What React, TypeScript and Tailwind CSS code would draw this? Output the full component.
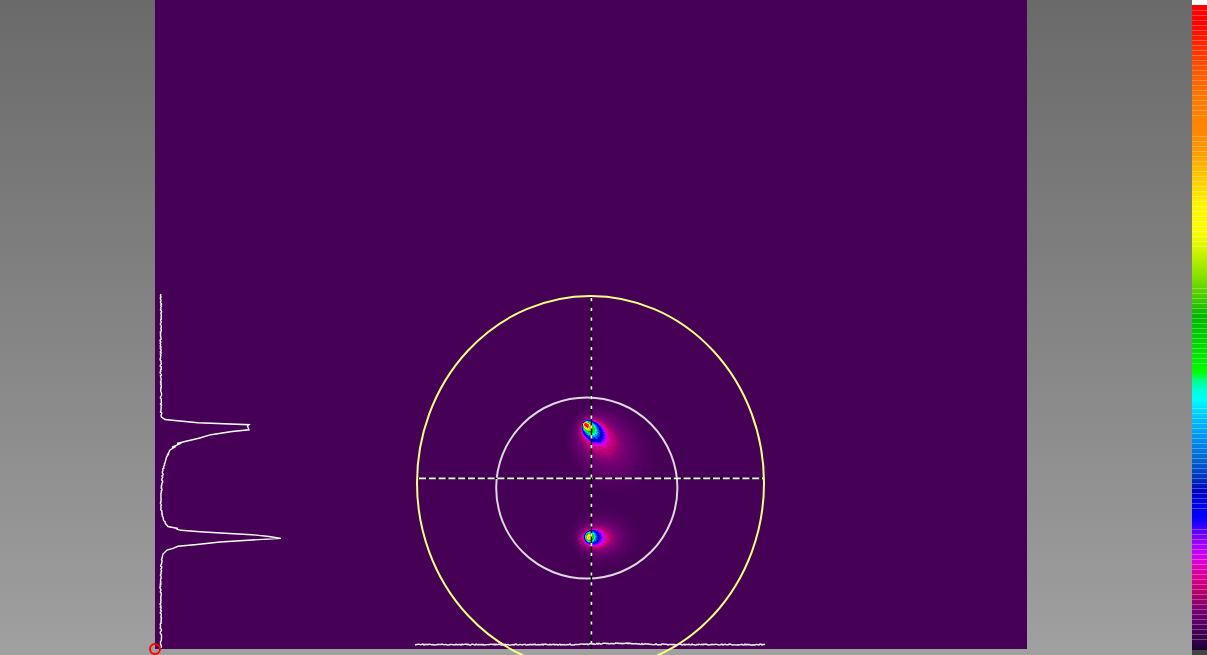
type Contour = { level: number; cx: number; cy: number; a: number; b: number; angle: number };

const COLOR_STOPS: [number, number, number, number][] = [
  [0, 32, 0, 48],
  [0.03, 70, 0, 86],
  [0.05, 98, 0, 106],
  [0.07, 125, 0, 118],
  [0.09, 165, 0, 112],
  [0.11, 205, 0, 125],
  [0.13, 222, 0, 190],
  [0.15, 200, 0, 255],
  [0.18, 110, 0, 255],
  [0.21, 0, 0, 255],
  [0.25, 0, 0, 195],
  [0.29, 0, 90, 210],
  [0.35, 0, 180, 255],
  [0.39, 0, 255, 255],
  [0.435, 0, 255, 0],
  [0.52, 0, 185, 0],
  [0.6, 170, 230, 0],
  [0.68, 255, 250, 0],
  [0.8, 255, 136, 0],
  [0.95, 255, 0, 0],
  [1, 255, 0, 0],
];

const UPPER_SPOT: Contour[] = [
  { level: 0.031, cx: 610, cy: 449, a: 48, b: 40, angle: 45 },
  { level: 0.045, cx: 605, cy: 444, a: 36, b: 28, angle: 45 },
  { level: 0.065, cx: 601, cy: 440, a: 27, b: 19, angle: 45 },
  { level: 0.09, cx: 598, cy: 437, a: 21, b: 14.5, angle: 45 },
  { level: 0.12, cx: 595, cy: 433.5, a: 16, b: 11, angle: 45 },
  { level: 0.16, cx: 593.5, cy: 432, a: 14, b: 9.5, angle: 45 },
  { level: 0.21, cx: 592.5, cy: 431, a: 12.5, b: 8.3, angle: 45 },
  { level: 0.28, cx: 591, cy: 429.5, a: 10, b: 6.7, angle: 45 },
  { level: 0.39, cx: 589.5, cy: 428, a: 7.8, b: 5, angle: 45 },
  { level: 0.52, cx: 588, cy: 427, a: 5.8, b: 3.8, angle: 45 },
  { level: 0.68, cx: 587, cy: 426, a: 4.2, b: 2.8, angle: 45 },
  { level: 0.95, cx: 586.5, cy: 425, a: 2.2, b: 1.4, angle: 45 },
];

const LOWER_SPOT: Contour[] = [
  { level: 0.031, cx: 604, cy: 537, a: 34, b: 29, angle: 0 },
  { level: 0.045, cx: 601, cy: 538, a: 25, b: 19, angle: 0 },
  { level: 0.07, cx: 597.5, cy: 538, a: 19, b: 13, angle: 0 },
  { level: 0.1, cx: 595.5, cy: 538, a: 14, b: 9.8, angle: 0 },
  { level: 0.15, cx: 593.5, cy: 537.5, a: 10, b: 8, angle: 0 },
  { level: 0.21, cx: 592, cy: 537, a: 7.8, b: 7, angle: 0 },
  { level: 0.28, cx: 591, cy: 537, a: 6, b: 6, angle: 0 },
  { level: 0.39, cx: 590, cy: 537, a: 4.6, b: 4.7, angle: 0 },
  { level: 0.52, cx: 589.5, cy: 537, a: 3.6, b: 3.6, angle: 0 },
  { level: 0.72, cx: 589, cy: 537, a: 2, b: 2, angle: 0 },
];

function noise(x: number, y: number) {
  const n = Math.sin(x * 127.1 + y * 311.7) * 43758.5453;
  return n - Math.floor(n) - 0.5;
}

function colorAt(t: number) {
  let i = 1;
  while (i < COLOR_STOPS.length - 1 && COLOR_STOPS[i][0] < t) i++;
  const lo = COLOR_STOPS[i - 1];
  const hi = COLOR_STOPS[i];
  const f = Math.min(1, Math.max(0, (t - lo[0]) / (hi[0] - lo[0])));
  const mix = (k: number) => Math.round(lo[k] + (hi[k] - lo[k]) * f);
  return `rgb(${mix(1)},${mix(2)},${mix(3)})`;
}

function distance(c: Contour, x: number, y: number) {
  const r = (c.angle * Math.PI) / 180;
  const dx = x - c.cx;
  const dy = y - c.cy;
  const u = dx * Math.cos(r) + dy * Math.sin(r);
  const v = dy * Math.cos(r) - dx * Math.sin(r);
  return Math.hypot(u / c.a, v / c.b);
}

function intensity(spot: Contour[], x: number, y: number) {
  if (distance(spot[0], x, y) >= 1) return 0;
  for (let i = 1; i < spot.length; i++) {
    const outer = 1 - distance(spot[i - 1], x, y);
    const inner = distance(spot[i], x, y) - 1;
    if (inner > 0) {
      const f = Math.max(0, outer) / (Math.max(0, outer) + inner);
      return spot[i - 1].level + (spot[i].level - spot[i - 1].level) * f;
    }
  }
  return spot[spot.length - 1].level;
}

/* One path per intensity step, made of horizontal runs of sensor pixels. */
function rasterize(spot: Contour[], x0: number, y0: number, x1: number, y1: number) {
  const paths = new Map<number, string>();
  for (let y = y0; y < y1; y++) {
    let start = x0;
    let current = -1;
    for (let x = x0; x <= x1; x++) {
      let t = x < x1 ? intensity(spot, x + 0.5, y + 0.5) : 0;
      if (t > 0) t *= 1 + noise(x, y) * 0.14;
      const step = t > 0.0305 ? Math.round(t * 400) : -1;
      if (step !== current || x === x1) {
        if (current >= 0) {
          paths.set(current, (paths.get(current) ?? "") + `M${start} ${y}h${x - start}v1H${start}z`);
        }
        start = x;
        current = step;
      }
    }
  }
  return [...paths.entries()];
}

const SPOTS = [
  ...rasterize(UPPER_SPOT, 560, 400, 665, 500),
  ...rasterize(LOWER_SPOT, 565, 505, 645, 570),
];

const VERTICAL_KEYS: [number, number][] = [
  [161, 294], [160.7, 345], [161, 410], [161.5, 417], [165, 419.5], [180, 421], [198, 422.7],
  [249, 424.7], [247.5, 426], [249, 429.8], [232, 431.5], [211, 434.7], [198, 438.5], [201, 437.8],
  [185, 441.5], [177, 443.5], [182, 442.8], [172, 447.2], [176, 446.5], [170, 450], [168, 454],
  [169, 453.5], [166.5, 457], [165, 463], [163, 470], [162, 483], [161, 497], [161, 507],
  [162.5, 515], [165, 523], [168, 526.5], [178, 528.5], [176, 528.8], [181, 530.3], [200, 531.7],
  [225, 533.2], [252, 534.7], [269, 536.5], [281, 538.4], [252, 540], [220, 542], [197, 544.5],
  [178, 546.3], [173, 548.3], [167, 550], [163, 554], [161.5, 560], [161, 572], [160.5, 580],
  [161, 648],
];

function verticalProfile() {
  const out: string[] = [];
  VERTICAL_KEYS.forEach(([x, y], i) => {
    out.push(`${x},${y}`);
    const next = VERTICAL_KEYS[i + 1];
    if (next && next[1] - y > 6) {
      for (let s = y + 1; s < next[1]; s += 1) {
        const f = (s - y) / (next[1] - y);
        out.push(`${x + (next[0] - x) * f + noise(s, 7) * 1.4},${s}`);
      }
    }
  });
  return out.join(" ");
}

function horizontalProfile() {
  const out: string[] = [];
  for (let x = 415; x <= 765; x += 1) {
    const bump = 1.3 * Math.exp(-(((x - 617) / 28) ** 2));
    out.push(`${x},${644.6 - bump + noise(x, 3) * 1.1}`);
  }
  return out.join(" ");
}

const TICKED = "bg-[repeating-linear-gradient(to_bottom,rgba(255,255,255,0.28)_0px,rgba(255,255,255,0.28)_1px,transparent_1px,transparent_5px)]";

const SCALE_SEGMENTS = [
  { grow: 5, className: "bg-white" },
  { grow: 5, className: "" },
  { grow: 106, className: TICKED },
  { grow: 20, className: "" },
  { grow: 111, className: TICKED },
  { grow: 41, className: "" },
  { grow: 79, className: TICKED },
  { grow: 41, className: "" },
  { grow: 101, className: TICKED },
  { grow: 20, className: "" },
  { grow: 111, className: TICKED },
  { grow: 10, className: "" },
  { grow: 5, className: "bg-[#444444]" },
];

function BeamView() {
  return (
    <div className="relative bg-[#460056]">
      <svg
        className="absolute inset-0 h-full w-full overflow-visible"
        viewBox="155 0 872 649"
        role="img"
        aria-label="Beam intensity"
        fill="none"
      >
        <g shapeRendering="crispEdges">
          {SPOTS.map(([step, d], i) => (
            <path key={i} d={d} fill={colorAt(step / 400)} />
          ))}
        </g>
        <circle cx="586.8" cy="488" r="90.6" stroke="#dcd8de" strokeWidth="2" />
        <path d="M417 478.4H764" stroke="#000" strokeWidth="1.4" />
        <path d="M419 478.4H764" stroke="#fff" strokeWidth="1.6" strokeDasharray="7 2.8" />
        <path d="M591.4 297V649" stroke="#000" strokeWidth="1.4" />
        <path d="M591.4 298V645" stroke="#fff" strokeWidth="1.6" strokeDasharray="3.2 6.6" />
        <ellipse cx="590.5" cy="483" rx="173.5" ry="187" stroke="#ffff80" strokeWidth="2" />
        <polyline points={verticalProfile()} stroke="#fff" strokeWidth="1.4" />
        <polyline points={horizontalProfile()} stroke="#eee6f0" strokeWidth="1.5" />
        <circle cx="155" cy="649" r="5" stroke="#f00" strokeWidth="2" />
      </svg>
    </div>
  );
}

function ColorScale() {
  return (
    <aside
      aria-label="Intensity scale"
      className="flex w-[15px] shrink-0 flex-col bg-[linear-gradient(to_bottom,#f00_0%,#f00_3.5%,#ff3000_7.5%,#ff5800_11%,#ff7800_15%,#ff8200_18%,#ff8800_20.5%,#ff9900_23%,#ffc800_27%,#fff600_31.5%,#fffc00_35%,#e0f800_37.5%,#b0ec00_40%,#78dc00_43%,#38c800_46%,#00b800_48.2%,#00cc00_51%,#00e000_53.5%,#00ff00_56.8%,#00ff80_58%,#00ffd0_59.4%,#00ffff_61%,#00c8ff_63.5%,#0090f8_67%,#0068d0_70%,#0030c0_73%,#0000c0_75%,#0000e8_77%,#0000ff_79%,#2800ff_80%,#5800ff_81%,#a000ff_83%,#c800ff_84.5%,#e000c0_86.2%,#dc0098_87.8%,#c00070_90%,#a00068_91.3%,#780074_93.2%,#600068_94.7%,#480058_96.2%,#300048_98%,#200030_99.2%)]"
    >
      {SCALE_SEGMENTS.map((segment, i) => (
        <div key={i} className={segment.className} style={{ flex: `${segment.grow} 1 0` }} />
      ))}
    </aside>
  );
}

export default function App() {
  return (
    <main className="flex h-screen overflow-hidden">
      <section className="grid flex-1 grid-cols-[155fr_872fr_165fr] overflow-hidden bg-linear-to-b from-[#6a6a6a] to-[#a0a0a0] pb-1.5">
        <div />
        <BeamView />
        <div />
      </section>
      <ColorScale />
    </main>
  );
}
